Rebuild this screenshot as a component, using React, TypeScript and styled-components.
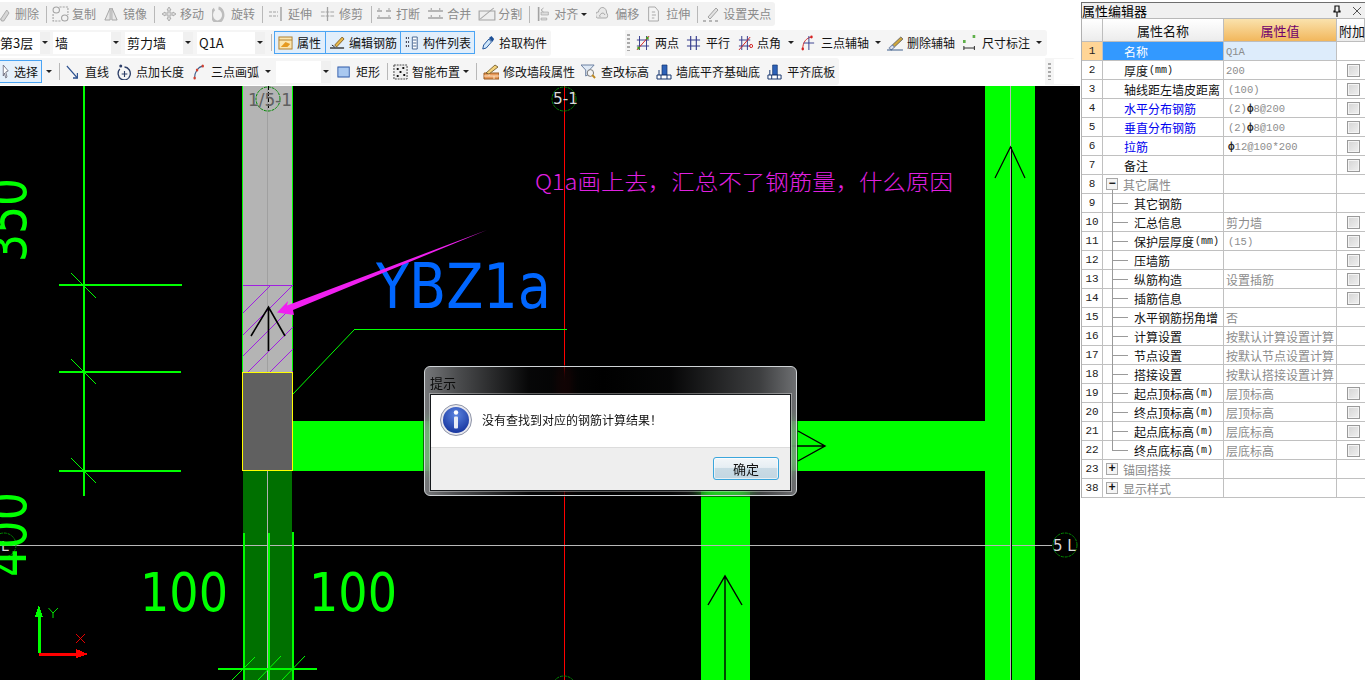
import React from "react";
import styled, { createGlobalStyle } from "styled-components";

const CJK = `"Noto Sans CJK SC", "Liberation Sans", sans-serif`;
const MONO = `"Liberation Mono", "Noto Sans CJK SC", monospace`;

const Global = createGlobalStyle`
  html, body { margin: 0; padding: 0; width: 1365px; height: 680px; overflow: hidden; background: #fff; }
  * { box-sizing: border-box; }
`;

const Page = styled.div`
  width: 1365px; height: 680px; display: flex; overflow: hidden;
  font: 12px/1 ${CJK}; color: #111; background: #fff;
`;
const Main = styled.div`width: 1080px; height: 680px; display: flex; flex-direction: column; flex: none;`;
const Toolbar = styled.div`height: 86px; flex: none; display: flex; flex-direction: column; background: #fff; overflow: hidden;`;
const Row = styled.div<{ $h: number }>`height: ${p => p.$h}px; display: flex; align-items: center; flex: none;`;
const Group = styled.div<{ $ml?: number; $w: number; $h: number; $bg?: string }>`
  margin-left: ${p => p.$ml ?? 0}px; width: ${p => p.$w}px; height: ${p => p.$h}px;
  display: flex; align-items: center; flex: none; background: ${p => p.$bg ?? "#f5f5f5"}; border-radius: 0 3px 3px 0;
`;
const Tool = styled.div<{ $ml: number; $gap: number; $off?: boolean }>`
  display: flex; align-items: center; flex: none; margin-left: ${p => p.$ml}px; gap: ${p => p.$gap}px;
  color: ${p => (p.$off ? "#8b8b8b" : "#141414")}; white-space: nowrap;
`;
const IconBox = styled.svg`flex: none; display: block;`;
const Sep = styled.div<{ $ml: number }>`width: 1px; height: 17px; background: #b8b8b8; margin-left: ${p => p.$ml}px; flex: none;`;
const Caret = styled.div<{ $ml: number }>`
  width: 0; height: 0; flex: none; margin-left: ${p => p.$ml}px;
  border-left: 3px solid transparent; border-right: 3px solid transparent; border-top: 3px solid #222;
`;
const Handle = styled.div<{ $ml: number }>`
  width: 3px; height: 17px; flex: none; margin-left: ${p => p.$ml}px;
  background: repeating-linear-gradient(#aaa 0 2px, transparent 2px 4px);
`;
const Combo = styled.div<{ $ml: number; $w: number; $indent?: number }>`
  width: ${p => p.$w}px; height: 22px; margin-left: ${p => p.$ml}px; flex: none; background: #fff;
  display: flex; align-items: center; justify-content: space-between; overflow: hidden;
  font-size: 13px; padding-left: ${p => p.$indent ?? 2}px;
`;
const ComboLabel = styled.span`white-space: nowrap; flex: none;`;
const ComboArrow = styled.div`
  width: 10px; height: 22px; flex: none; background: #f0f0f0; display: flex; align-items: center; justify-content: center;
`;
const Toggle = styled.div<{ $w: number; $pad: number; $gap: number; $ml?: number }>`
  width: ${p => p.$w}px; height: 23px; flex: none; display: flex; align-items: center; gap: ${p => p.$gap}px;
  padding-left: ${p => p.$pad}px; background: #e1eefb; border: 1px solid #4aa4f4; margin: 0 -1px 0 ${p => p.$ml ?? 0}px;
  white-space: nowrap;
`;
const SelectBtn = styled.div`
  width: 42px; height: 23px; flex: none; display: flex; align-items: center; gap: 2px; padding-left: 2px;
  background: #e6f1fc; border: 1px solid #4aa4f4; border-left: none;
`;
const EndBox = styled.div`width: 23px; height: 25px; background: #fff; margin-left: 3px; flex: none;`;

const Canvas = styled.div`position: relative; flex: 1; background: #000; overflow: hidden;`;
const Drawing = styled.svg`display: block; width: 1080px; height: 594px;`;

const Dialog = styled.div`
  position: absolute; left: 424px; top: 280px; width: 373px; height: 130px;
  border: 1px solid #cfd3d6; border-radius: 6px; padding: 0 5px 4px 5px; display: flex; flex-direction: column;
  backdrop-filter: blur(7px);
  background:
    linear-gradient(90deg, rgba(150,152,155,.78), rgba(120,122,125,.62) 9%, rgba(40,42,45,.16) 28%, rgba(0,0,0,0) 48%, rgba(40,42,45,.14) 66%, rgba(110,112,115,.55) 90%, rgba(140,142,145,.78));
  box-shadow: 0 0 0 1px rgba(0,0,0,.55);
`;
const DialogTitle = styled.div`height: 27px; flex: none; display: flex; align-items: center; padding: 3px 0 0; font-size: 13px; color: #0c0c0c;`;
const DialogBody = styled.div`flex: 1; border: 1px solid #16191c; background: #fff; display: flex; flex-direction: column; box-shadow: 0 0 0 1px rgba(255,255,255,.35);`;
const Message = styled.div`height: 52px; flex: none; display: flex; align-items: center; gap: 10px; padding: 0 0 3px 9px; font-size: 12px;`;
const DialogFoot = styled.div`flex: 1; background: #eeeeee; border-top: 1px solid #dcdcdc; display: flex; justify-content: flex-end; align-items: flex-start; padding: 9px 11px 0 0;`;
const OkBtn = styled.div`
  width: 66px; height: 23px; border: 1px solid #3ba6dc; border-radius: 3px; display: flex; align-items: center; justify-content: center;
  font-size: 13px; color: #111; background: linear-gradient(#f2f6f9, #e6eef3 45%, #c9dbe5 50%, #c3d6e1);
  box-shadow: inset 0 0 0 1px rgba(255,255,255,.6);
`;

const Panel = styled.div`width: 285px; height: 680px; flex: none; background: #fff; padding: 2px 0 0 1px; display: flex; flex-direction: column;`;
const TitleBar = styled.div`
  height: 16px; flex: none; background: #f0f0f0; border-top: 1px solid #6e6e6e; border-left: 1px solid #6e6e6e;
  display: flex; align-items: center; justify-content: space-between; font-size: 13px; line-height: 15px; color: #000;
`;
const TitleTools = styled.div`display: flex; align-items: center; gap: 10px; margin-right: -1px; overflow: hidden; width: 34px;`;
const Grid = styled.div`
  display: grid; grid-template-columns: 21px 121px 113px 28px; grid-template-rows: 23px; grid-auto-rows: 19px;
  border-left: 1px solid #b0b0b0; border-top: 1px solid #b8b8b8; width: 284px; flex: none;
`;
const HeadCell = styled.div<{ $active?: boolean; $left?: boolean }>`
  display: flex; align-items: center; justify-content: ${p => (p.$left ? "flex-start" : "center")};
  padding-left: ${p => (p.$left ? 2 : 0)}px;
  font-size: 13px; color: ${p => (p.$active ? "#70006c" : "#111")}; white-space: nowrap;
  background: ${p => (p.$active ? "linear-gradient(#fae2ad, #f2b75c)" : "linear-gradient(#ffffff, #ececec)")};
  border-right: 1px solid #bdbdbd; border-bottom: 1px solid #bdbdbd;
`;
const Num = styled.div<{ $sel?: boolean }>`
  display: flex; align-items: center; justify-content: center; font: 11px/1 ${MONO}; color: #222; padding-top: 1px;
  background: ${p => (p.$sel ? "#ffd596" : "#fff")}; border-right: 1px solid #c0c0c0; border-bottom: 1px solid #c0c0c0;
`;
type Tone = "plain" | "link" | "sel" | "group" | "child";
const NameCell = styled.div<{ $tone: Tone }>`
  position: relative; display: flex; align-items: center; white-space: nowrap; font-size: 12px; padding-top: 2px;
  padding-left: ${p => (p.$tone === "child" ? 31 : p.$tone === "group" ? 20 : 21)}px;
  color: ${p => ({ plain: "#111", link: "#0000f0", sel: "#fff", group: "#8a8a8a", child: "#111" }[p.$tone])};
  background: ${p => (p.$tone === "sel" ? "#3399ff" : "#fff")};
  border-right: 1px solid #c0c0c0; border-bottom: 1px solid #c0c0c0;
`;
const Unit = styled.span`font: 10px/1 ${MONO}; margin-left: 1px;`;
const ValCell = styled.div<{ $sel?: boolean }>`
  display: flex; align-items: center; padding: 2px 0 0 2px; white-space: nowrap; color: #8c8c8c; font: 12px/1 ${CJK};
  background: ${p => (p.$sel ? "#ddecfb" : "#fff")};
  border-right: 1px solid #c0c0c0; border-bottom: 1px solid #c0c0c0;
`;
const ValCode = styled.span<{ $ml?: number }>`font: 10.5px/1 ${MONO}; margin-left: ${p => p.$ml ?? 0}px;`;
const Bar = styled.b`color: #222; font: 700 11px/1 ${MONO};`;
const AddCell = styled.div`display: flex; align-items: center; padding-left: 10px; border-bottom: 1px solid #c0c0c0;`;
const Check = styled.div`
  width: 13px; height: 13px; border: 1px solid #9a9a9a; background: linear-gradient(135deg, #d4d4d4, #f0f0f0);
  box-shadow: inset 0 0 0 1px #f4f4f4;
`;
const ExpandBox = styled.div`
  position: absolute; left: 3px; top: 3px; width: 12px; height: 12px; border: 1px solid #a8a8a8; background: #f4f4f4;
  display: flex; align-items: center; justify-content: center; font: 700 12px/1 ${MONO}; color: #111;
`;
const TreeV = styled.div<{ $last?: boolean; $group?: boolean }>`
  position: absolute; left: 9px; top: ${p => (p.$group ? 15 : 0)}px; width: 1px;
  height: ${p => (p.$last ? 9 : p.$group ? 4 : 19)}px; background: #9a9a9a;
`;
const TreeH = styled.div`position: absolute; left: 9px; top: 9px; width: 16px; height: 1px; background: #9a9a9a;`;

/* ---------- icons ---------- */
const g = "#a2a2a2";
const icons: Record<string, React.ReactNode> = {
  erase: <><path d="M1 13L9 4l3 3-7 8H2z" fill="#d6d6d6" stroke={g} /><path d="M-2 15l3-2" stroke={g} /></>,
  copy: <><circle cx="4" cy="4" r="3" fill="none" stroke={g} /><circle cx="12" cy="12" r="3" fill="none" stroke={g} /><path d="M7 1h8v8M1 8v7h7" fill="none" stroke={g} strokeDasharray="2 1" /></>,
  mirror: <><path d="M7 2L1 14h6zM9 2l6 12H9z" fill="#e6e6e6" stroke={g} /></>,
  move: <path d="M8 1l2 3H9v3h3V6l3 2-3 2V9H9v3h1l-2 3-2-3h1V9H4v1L1 8l3-2v1h3V4H6z" fill="#dcdcdc" stroke={g} strokeWidth=".8" />,
  rotate: <path d="M3 3a7 7 0 1 0 5-1" fill="none" stroke="#bdbdbd" strokeWidth="3" />,
  extend: <><path d="M1 6h9M1 10h9" stroke={g} strokeDasharray="3 1" /><path d="M13 1v14" stroke={g} strokeWidth="1.4" /></>,
  trim: <><path d="M1 6h14M1 10h14" stroke={g} strokeDasharray="4 1" /><path d="M8 1v14" stroke={g} strokeWidth="1.4" /></>,
  break: <><path d="M1 5h5M10 5h5M1 12h14" stroke={g} strokeWidth="1.3" /><path d="M3 2v2M13 2v2M3 9v2M13 9v2" stroke={g} /></>,
  merge: <><path d="M1 5h14M1 12h14" stroke={g} strokeWidth="1.3" /><path d="M4 2v2M12 2v2M4 9v2M12 9v2" stroke={g} /></>,
  split: <><path d="M1 14h14L15 5H1z" fill="#eee" stroke={g} /><path d="M2 13L14 2" stroke={g} /></>,
  align: <><path d="M2 1v14" stroke={g} strokeWidth="2" /><path d="M5 6h9v3H5zM5 12h7v2H5z" fill="#ddd" stroke={g} strokeWidth=".7" /><path d="M8 2l-3 2 3 2" fill="none" stroke={g} /></>,
  offset: <><path d="M2 12a3 3 0 0 1 1-6 5 5 0 0 1 10 1 3 3 0 0 1 0 5z" fill="#e8e8e8" stroke={g} /><path d="M5 11a2 2 0 0 1 1-3 3 3 0 0 1 5 1" fill="none" stroke={g} /></>,
  stretch: <><path d="M2 1h8l4 4v10H2z" fill="#f4f4f4" stroke={g} /><path d="M6 6h4M6 9h5M6 12h3" stroke={g} /></>,
  grip: <><path d="M5 11l8-9 2 2-8 9z" fill="#e2e2e2" stroke={g} /><path d="M0 15h3M6 15h3M12 15h3" stroke={g} strokeWidth="1.6" /></>,
  prop: <><rect x="1" y="2" width="14" height="12" fill="#fbe6b0" stroke="#b08030" /><path d="M1 5h14" stroke="#b08030" /><path d="M3 12l5-5 5 2-3 3z" fill="#e69a20" /></>,
  editbar: <><path d="M5 10L13 2l2 2-8 8z" fill="#e9b94a" stroke="#6b4a12" strokeWidth=".8" /><path d="M0 13h15" stroke="#222" strokeWidth="1.3" /><path d="M2 10l3 2" stroke="#222" /></>,
  list: <><path d="M9 2h6v12H9z" fill="#fff" stroke="#3b5c8a" /><path d="M10 5h4M10 8h4M10 11h4" stroke="#3b5c8a" /><path d="M1 3h4M1 7h4M1 11h4" stroke="#445" strokeWidth="2" strokeDasharray="1.4 1.4" /></>,
  pick: <><path d="M2 14l1-4 6-6 3 3-6 6z" fill="#cfe6fa" stroke="#1c4f96" /><path d="M9 3l3-2 3 3-2 3z" fill="#1c4f96" /></>,
  two: <><path d="M4 1v14M12 1v14M1 5h14M1 11h14" stroke="#333a8c" /><path d="M1 15L15 1" stroke="#d42020" /><circle cx="3" cy="13" r="1.6" fill="#4a9a20" /><circle cx="13" cy="3" r="1.6" fill="#4a9a20" /></>,
  par: <path d="M5 1v14M11 1v14M1 5h14M1 11h14" stroke="#333a8c" strokeWidth="1.2" />,
  ang: <><path d="M4 1v14M10 1v14M1 5h12M1 11h12" stroke="#333a8c" /><path d="M1 15L13 2" stroke="#d42020" /><circle cx="14" cy="11" r="1.6" fill="none" stroke="#d42020" /></>,
  arc3: <><path d="M2 14C2 7 6 3 12 2" fill="none" stroke="#d42020" /><path d="M9 1v14M3 8h12" stroke="#333a8c" /><circle cx="2" cy="14" r="1.4" fill="#d42020" /><circle cx="12" cy="2" r="1.4" fill="#d42020" /></>,
  delaxis: <><path d="M5 10l8-8 2 2-8 8z" fill="#cfa63c" stroke="#5a5a5a" strokeWidth=".8" /><path d="M2 13l3-3 2 2-3 3z" fill="#e0e6f2" stroke="#7a8aaa" /><path d="M0 15h15" stroke="#3b5c8a" /></>,
  dim: <><rect x="0" y="5" width="3" height="3" fill="#5fb04a" /><rect x="11" y="0" width="3" height="3" fill="#5fb04a" /><path d="M1 11v4M13 11v4M1 13h12" stroke="#222" /></>,
  pointer: <><path d="M2 1l8 6-4 1 2 5-2 1-2-5-2 3z" fill="#fff" stroke="#667" /></>,
  line: <><path d="M1 2l12 12" stroke="#2a4f8f" strokeWidth="1.3" /><path d="M13 9v5H8" fill="none" stroke="#2a4f8f" strokeWidth="1.3" /></>,
  add: <><path d="M3 5a6.5 6.5 0 1 0 5-2" fill="none" stroke="#2d3f68" strokeWidth="1.4" /><path d="M8 7v6M5 10h6" stroke="#2d3f68" strokeWidth="1.2" /><circle cx="4" cy="2" r="1.6" fill="#2d3f68" /></>,
  arc: <><path d="M2 14C2 8 6 3 12 2" fill="none" stroke="#3b5c8a" strokeWidth="1.3" /><circle cx="2" cy="14" r="1.5" fill="#d04030" /><circle cx="5" cy="6" r="1.5" fill="#d04030" /><circle cx="12" cy="2" r="1.5" fill="#d04030" /></>,
  rect: <rect x="1" y="3" width="13" height="10" fill="#a9c8f0" stroke="#2c58a8" />,
  smart: <><rect x="1" y="1" width="14" height="14" fill="#eee" stroke="#444" strokeDasharray="2 1" /><path d="M4 5h2M10 4h2M7 8h2M4 12h2M11 11h2" stroke="#111" strokeWidth="2" /></>,
  mod: <><path d="M1 9h15v6H1z" fill="#e89a5a" stroke="#9a5a20" /><path d="M1 12h15M6 9v3M11 12v3" stroke="#fbe0c0" /><path d="M3 9l9-8 3 2-9 7z" fill="#f4d27a" stroke="#6a5020" strokeWidth=".8" /></>,
  check: <><path d="M0 1h14L9 6v4l-4 2V6z" fill="#dfe9f5" stroke="#6a7fa0" /><circle cx="10" cy="9" r="3.4" fill="#f4f4f4" stroke="#777" /><path d="M12 11l3 3" stroke="#c08a20" strokeWidth="2" /></>,
  wall: <><path d="M6 1h5v10H6z" fill="#2d62b8" stroke="#15356e" strokeWidth=".7" /><path d="M1 11h14v4H1z" fill="#fff" stroke="#15356e" /><path d="M5 11v4M11 11v4" stroke="#15356e" /><path d="M3 6v5" stroke="#15356e" /></>,
};
const Icon = ({ k, w }: { k: string; w: number }) => (
  <IconBox width={w} height={16} viewBox="0 0 16 16" preserveAspectRatio="none">{icons[k]}</IconBox>
);

type T = { ml: number; gap?: number; k?: string; w?: number; t?: string; kind?: "sep" | "caret" | "handle" };
const render = (items: T[], off?: boolean) =>
  items.map((it, i) => {
    if (it.kind === "sep") return <Sep key={i} $ml={it.ml} />;
    if (it.kind === "caret") return <Caret key={i} $ml={it.ml} />;
    if (it.kind === "handle") return <Handle key={i} $ml={it.ml} />;
    return (
      <Tool key={i} $ml={it.ml} $gap={it.gap ?? 4} $off={off}>
        <Icon k={it.k!} w={it.w!} />
        <span>{it.t}</span>
      </Tool>
    );
  });
const S = (ml: number): T => ({ ml, kind: "sep" });
const C = (ml: number): T => ({ ml, kind: "caret" });

const row1: T[] = [
  { ml: 0, k: "erase", w: 12, gap: 3, t: "删除" }, S(7),
  { ml: 5, k: "copy", w: 17, gap: 3, t: "复制" },
  { ml: 8, k: "mirror", w: 14, gap: 5, t: "镜像" }, S(7),
  { ml: 6, k: "move", w: 16, gap: 3, t: "移动" },
  { ml: 8, k: "rotate", w: 13, gap: 6, t: "旋转" }, S(7),
  { ml: 5, k: "extend", w: 16, gap: 4, t: "延伸" },
  { ml: 8, k: "trim", w: 15, gap: 4, t: "修剪" }, S(8),
  { ml: 4, k: "break", w: 16, gap: 4, t: "打断" },
  { ml: 7, k: "merge", w: 17, gap: 3, t: "合并" },
  { ml: 7, k: "split", w: 18, gap: 2, t: "分割" }, S(7),
  { ml: 7, k: "align", w: 13, gap: 4, t: "对齐" }, C(3),
  { ml: 9, k: "offset", w: 13, gap: 6, t: "偏移" },
  { ml: 8, k: "stretch", w: 13, gap: 6, t: "拉伸" }, S(7),
  { ml: 5, k: "grip", w: 16, gap: 4, t: "设置夹点" },
];
const row2b: T[] = [
  { ml: 2, kind: "handle" },
  { ml: 6, k: "two", w: 14, gap: 5, t: "两点" },
  { ml: 7, k: "par", w: 15, gap: 5, t: "平行" },
  { ml: 8, k: "ang", w: 15, gap: 4, t: "点角" }, C(7),
  { ml: 7, k: "arc3", w: 14, gap: 6, t: "三点辅轴" }, C(6),
  { ml: 6, k: "delaxis", w: 17, gap: 3, t: "删除辅轴" },
  { ml: 8, k: "dim", w: 14, gap: 5, t: "尺寸标注" }, C(6),
];
const row3a: T[] = [
  C(4), S(7),
  { ml: 6, k: "line", w: 14, gap: 5, t: "直线" },
  { ml: 8, k: "add", w: 15, gap: 4, t: "点加长度" },
  { ml: 9, k: "arc", w: 13, gap: 5, t: "三点画弧" }, C(6),
];
const row3b: T[] = [
  { ml: 6, k: "rect", w: 14, gap: 5, t: "矩形" }, S(7),
  { ml: 5, k: "smart", w: 15, gap: 4, t: "智能布置" }, C(3), S(7),
  { ml: 6, k: "mod", w: 16, gap: 4, t: "修改墙段属性" },
  { ml: 6, k: "check", w: 15, gap: 5, t: "查改标高" },
  { ml: 7, k: "wall", w: 16, gap: 4, t: "墙底平齐基础底" },
  { ml: 7, k: "wall", w: 15, gap: 5, t: "平齐底板" },
];

const combos = [
  { ml: 0, w: 50, t: "第3层", indent: -5 },
  { ml: 3, w: 68, t: "墙" },
  { ml: 4, w: 68, t: "剪力墙" },
  { ml: 4, w: 68, t: "Q1A" },
];

/* ---------- table ---------- */
type R = { n: number; name: string; unit?: string; val?: React.ReactNode; chk?: boolean; tone: Tone; box?: "-" | "+"; last?: boolean };
const Code = ValCode;
const rows: R[] = [
  { n: 1, name: "名称", val: <Code>Q1A</Code>, tone: "sel" },
  { n: 2, name: "厚度", unit: "(mm)", val: <Code>200</Code>, chk: true, tone: "plain" },
  { n: 3, name: "轴线距左墙皮距离", val: <Code $ml={2}>(100)</Code>, chk: true, tone: "plain" },
  { n: 4, name: "水平分布钢筋", val: <Code $ml={2}>(2)<Bar>ф</Bar>8@200</Code>, chk: true, tone: "link" },
  { n: 5, name: "垂直分布钢筋", val: <Code $ml={2}>(2)<Bar>ф</Bar>8@100</Code>, chk: true, tone: "link" },
  { n: 6, name: "拉筋", val: <Code $ml={2}><Bar>ф</Bar>12@100*200</Code>, chk: true, tone: "link" },
  { n: 7, name: "备注", chk: true, tone: "plain" },
  { n: 8, name: "其它属性", tone: "group", box: "-" },
  { n: 9, name: "其它钢筋", tone: "child" },
  { n: 10, name: "汇总信息", val: "剪力墙", chk: true, tone: "child" },
  { n: 11, name: "保护层厚度", unit: "(mm)", val: <Code $ml={2}>(15)</Code>, chk: true, tone: "child" },
  { n: 12, name: "压墙筋", chk: true, tone: "child" },
  { n: 13, name: "纵筋构造", val: "设置插筋", chk: true, tone: "child" },
  { n: 14, name: "插筋信息", chk: true, tone: "child" },
  { n: 15, name: "水平钢筋拐角增", val: "否", tone: "child" },
  { n: 16, name: "计算设置", val: "按默认计算设置计算", tone: "child" },
  { n: 17, name: "节点设置", val: "按默认节点设置计算", tone: "child" },
  { n: 18, name: "搭接设置", val: "按默认搭接设置计算", tone: "child" },
  { n: 19, name: "起点顶标高", unit: "(m)", val: "层顶标高", chk: true, tone: "child" },
  { n: 20, name: "终点顶标高", unit: "(m)", val: "层顶标高", chk: true, tone: "child" },
  { n: 21, name: "起点底标高", unit: "(m)", val: "层底标高", chk: true, tone: "child" },
  { n: 22, name: "终点底标高", unit: "(m)", val: "层底标高", chk: true, tone: "child", last: true },
  { n: 23, name: "锚固搭接", tone: "group", box: "+" },
  { n: 38, name: "显示样式", tone: "group", box: "+" },
];

/* ---------- drawing ---------- */
const G = "#00ff00";
const L = (x1: number, y1: number, x2: number, y2: number, s: string, w = 1) => (
  <line x1={x1} y1={y1} x2={x2} y2={y2} stroke={s} strokeWidth={w} />
);
const Bubble = (cx: number, cy: number) => <circle cx={cx} cy={cy} r={12} fill="none" stroke="#008a00" strokeWidth={1} strokeDasharray="3 1" />;
const font = `"DejaVu Sans", sans-serif`;

const Cad = () => (
  <Drawing viewBox="0 86 1080 594">
    <defs>
      <clipPath id="hatch"><rect x="243" y="285" width="50" height="87" /></clipPath>
    </defs>
    {/* walls */}
    <rect x="293" y="421" width="692" height="50" fill={G} />
    <rect x="985" y="86" width="50" height="594" fill={G} />
    <rect x="701" y="471" width="49" height="209" fill={G} />
    <rect x="243" y="86" width="50" height="286" fill="#b4b4b4" />
    <rect x="243" y="471" width="49" height="209" fill="#007000" />
    <rect x="243" y="372" width="49" height="99" fill="#606060" />
    <g shapeRendering="crispEdges">
      {L(242.5, 86, 242.5, 372, G)}{L(292.5, 86, 292.5, 372, G)}
      <rect x="242.5" y="372.5" width="50" height="98" fill="none" stroke="#ffff00" />
      {L(267.5, 86, 267.5, 372, "#a0a0a0")}{L(267.5, 471, 267.5, 680, "#b0b0b0")}
      {L(243, 285.5, 292, 285.5, "#a020e0")}
      {L(564.5, 86, 564.5, 680, "#ff0000")}
      {L(0, 545.5, 1052, 545.5, "#b8b8b8")}
      {L(1010.5, 86, 1010.5, 680, "#b8b8b8")}
      {L(1011.5, 147, 1011.5, 680, "#000")}
      {L(84, 86, 84, 496, G, 2)}
      {L(59, 285, 182, 285, G, 2)}{L(59, 372, 181, 372, G, 2)}{L(59, 471, 181, 471, G, 2)}
      {L(243.5, 533, 243.5, 680, G, 2)}{L(268.5, 533, 268.5, 680, G, 2)}{L(292.5, 532, 292.5, 680, G, 2)}
      {L(218, 669, 317, 669, G, 2)}
      {L(39, 653, 39, 612, G, 3)}
      <path d="M39 605l4 12h-8z" fill={G} />
      {L(39, 654, 80, 654, "#ff0000", 3)}
      <path d="M88 654l-12 4v-9z" fill="#ff0000" />
      {L(354, 329.5, 567, 329.5, G)}
    </g>
    <g clipPath="url(#hatch)" shapeRendering="crispEdges">
      {[556, 578, 599, 620, 642, 664].map(c => <line key={c} x1={243} y1={c - 243} x2={293} y2={c - 293} stroke="#a020e0" />)}
    </g>
    {L(293, 394, 354, 330, G)}
    {[273, 359, 458].map(y => <React.Fragment key={y}>{L(71, y, 96, y + 25, G)}</React.Fragment>)}
    {L(232, 680, 255, 657, G)}{L(258, 680, 281, 656, G)}{L(282, 680, 305, 656, G)}
    {/* arrows in walls */}
    <path d="M251 336L268.5 307L285 336M268.5 307V351" fill="none" stroke="#000" strokeWidth="1.6" />
    <path d="M798 431L825 446L798 461M700 446H825" fill="none" stroke="#000" strokeWidth="1.4" />
    <path d="M708 605L725 576L742 605M725 576V680" fill="none" stroke="#000" strokeWidth="1.4" />
    <path d="M995 178L1010.5 147L1025 178" fill="none" stroke="#000" strokeWidth="1.2" />
    {/* bubbles */}
    {Bubble(268, 99)}{Bubble(564, 99)}{Bubble(1065, 545)}{Bubble(4, 545)}{Bubble(564, 688)}
    <line x1="268.5" y1="86" x2="268.5" y2="110" stroke="#000" strokeDasharray="4 2" />
    <text x="248" y="106" fontFamily={font} fontSize="17" fill="#606060" textLength="44" lengthAdjust="spacing">1/5-1</text>
    <text x="553" y="104" fontFamily={font} fontSize="15" fill="#d8d8d8" textLength="25" lengthAdjust="spacingAndGlyphs">5-1</text>
    <text x="1053" y="551" fontFamily={font} fontSize="15" fill="#d8d8d8" xmlSpace="preserve">5 L</text>
    <text x="1" y="551" fontFamily={font} fontSize="14" fill="#d8d8d8">L</text>
    {/* dimensions */}
    <text x="140" y="611" fontFamily={font} fontSize="53" fill={G} textLength="88" lengthAdjust="spacingAndGlyphs">100</text>
    <text x="309" y="611" fontFamily={font} fontSize="53" fill={G} textLength="88" lengthAdjust="spacingAndGlyphs">100</text>
    <text transform="translate(26 262) rotate(-90)" fontFamily={font} fontSize="53" fill={G} textLength="84" lengthAdjust="spacingAndGlyphs">350</text>
    <text transform="translate(26 577) rotate(-90)" fontFamily={font} fontSize="53" fill={G} textLength="85" lengthAdjust="spacingAndGlyphs">400</text>
    {/* notes */}
    <text x="376" y="308" fontFamily={font} fontSize="62" fill="#0066ff" textLength="175" lengthAdjust="spacingAndGlyphs">YBZ1a</text>
    <polygon points="277,312.5 288,301 287,305.5 487,230 293,310 294,315" fill="#f020f0" />
    <text x="535" y="190" fontFamily={`"Noto Sans CJK SC", sans-serif`} fontSize="22" fontWeight="300" fill="#e020e0" textLength="418" lengthAdjust="spacingAndGlyphs">Q1a画上去，汇总不了钢筋量，什么原因</text>
    {/* UCS */}
    <path d="M48.5 608l4.5 5 5-5M53 613v5" fill="none" stroke={G} strokeWidth=".9" />
    <path d="M76 634l9 9M85 634l-9 9" fill="none" stroke="#ff0000" strokeWidth=".9" />
  </Drawing>
);

export default function App() {
  return (
    <Page>
      <Global />
      <Main>
        <Toolbar>
          <Row $h={28}>
            <Group $w={775} $h={24} $bg="#f2f2f2">{render(row1, true)}</Group>
          </Row>
          <Row $h={29}>
            <Group $w={551} $h={26}>
              {combos.map(c => (
                <Combo key={c.t} $ml={c.ml} $w={c.w} $indent={c.indent}>
                  <ComboLabel>{c.t}</ComboLabel>
                  <ComboArrow><Caret $ml={0} /></ComboArrow>
                </Combo>
              ))}
              <Sep $ml={6} />
              <Toggle $ml={2} $w={52} $pad={3} $gap={4}><Icon k="prop" w={15} /><span>属性</span></Toggle>
              <Toggle $w={76} $pad={4} $gap={4}><Icon k="editbar" w={15} /><span>编辑钢筋</span></Toggle>
              <Toggle $w={75} $pad={4} $gap={5}><Icon k="list" w={13} /><span>构件列表</span></Toggle>
              <Tool $ml={7} $gap={4}><Icon k="pick" w={14} /><span>拾取构件</span></Tool>
            </Group>
            <Group $ml={74} $w={422} $h={26}>{render(row2b)}</Group>
          </Row>
          <Row $h={29}>
            <Group $w={839} $h={27}>
              <SelectBtn><Icon k="pointer" w={10} /><span>选择</span></SelectBtn>
              {render(row3a)}
              <Combo $ml={5} $w={55}><ComboLabel /><ComboArrow><Caret $ml={0} /></ComboArrow></Combo>
              {render(row3b)}
            </Group>
            <Group $ml={206} $w={30} $h={27}><Handle $ml={3} /><EndBox /></Group>
          </Row>
        </Toolbar>
        <Canvas>
          <Cad />
          <Dialog>
            <DialogTitle>提示</DialogTitle>
            <DialogBody>
              <Message>
                <IconBox width={32} height={32} viewBox="0 0 32 32">
                  <defs>
                    <radialGradient id="inf" cx="50%" cy="30%" r="75%">
                      <stop offset="0" stopColor="#5b84e0" />
                      <stop offset="1" stopColor="#12309a" />
                    </radialGradient>
                  </defs>
                  <circle cx="16" cy="16" r="15.5" fill="#e8e8ee" stroke="#8f95a8" />
                  <circle cx="16" cy="16" r="13" fill="url(#inf)" />
                  <circle cx="16" cy="8.5" r="2.2" fill="#fff" />
                  <rect x="14" y="12.5" width="4" height="12" rx="1" fill="#e8ecf6" />
                </IconBox>
                <span>没有查找到对应的钢筋计算结果！</span>
              </Message>
              <DialogFoot><OkBtn>确定</OkBtn></DialogFoot>
            </DialogBody>
          </Dialog>
        </Canvas>
      </Main>
      <Panel>
        <TitleBar>
          <span>属性编辑器</span>
          <TitleTools>
            <IconBox width={10} height={12} viewBox="0 0 10 12">
              <path d="M3 1h4v5h1v1H2V6h1zM5 7v5" fill="none" stroke="#111" strokeWidth="1.2" />
            </IconBox>
            <IconBox width={10} height={10} viewBox="0 0 10 10">
              <path d="M1 1l8 8M9 1l-8 8" stroke="#555" />
            </IconBox>
          </TitleTools>
        </TitleBar>
        <Grid>
          <HeadCell />
          <HeadCell>属性名称</HeadCell>
          <HeadCell $active>属性值</HeadCell>
          <HeadCell $left>附加</HeadCell>
          {rows.map(r => (
            <React.Fragment key={r.n}>
              <Num $sel={r.tone === "sel"}>{r.n}</Num>
              <NameCell $tone={r.tone}>
                {r.box && <ExpandBox>{r.box === "-" ? "−" : "+"}</ExpandBox>}
                {r.box === "-" && <TreeV $group />}
                {r.tone === "child" && <><TreeV $last={r.last} /><TreeH /></>}
                {r.name}
                {r.unit && <Unit>{r.unit}</Unit>}
              </NameCell>
              <ValCell $sel={r.tone === "sel"}>{r.val}</ValCell>
              <AddCell>{r.chk && <Check />}</AddCell>
            </React.Fragment>
          ))}
        </Grid>
      </Panel>
    </Page>
  );
}
